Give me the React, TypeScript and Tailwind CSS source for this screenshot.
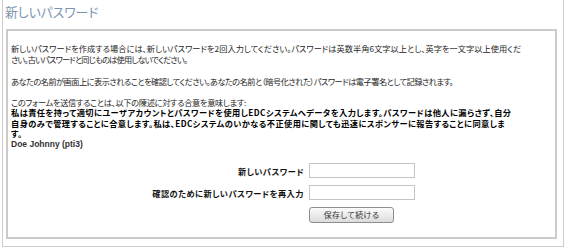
import React from 'react';

const jp = "font-['Noto_Sans_CJK_JP',sans-serif] [font-feature-settings:'palt']";

const FieldRow: React.FC<{ label: string }> = ({ label }) => (
  <div className="flex items-center gap-[5px]">
    <span className="w-[293px] text-right font-bold text-[8.2px] tracking-[0.5px] leading-[14px] text-[#111]">{label}</span>
    <input
      type="password"
      className="w-[106px] h-[15px] border border-[#c4c4c4] bg-white outline-none"
    />
  </div>
);

export default function App() {
  return (
    <div className={`w-[568px] h-[247px] bg-white ${jp}`}>
      <div className="ml-[2px] w-[562px] h-[247px] border border-t-0 border-[#cdcdcd] flex flex-col">
        <div className="h-[29px] pl-[2px] pt-[3px] text-[12.8px] leading-[17px] text-[#7b93b0] font-normal">
          新しいパスワード
        </div>
        <div className="ml-[3px] mr-[6px] h-[210px] border-2 border-[#cbcbcb] bg-white pl-[3px] pt-[12px] text-[8.2px] leading-[10.5px] text-[#262626]">
          <p className="whitespace-nowrap">
            <span className="block tracking-[0.05px]">
              新しいパスワードを作成する場合には、新しいパスワードを2回入力してください。パスワードは英数半角6文字以上とし、英字を一文字以上使用くだ
            </span>
            <span className="block tracking-[-0.8px]">さい。古いパスワードと同じものは使用しないでください。</span>
          </p>
          <p className="mt-[12px] whitespace-nowrap tracking-[-0.5px]">
            あなたの名前が画面上に表示されることを確認してください。あなたの名前と（暗号化された）パスワードは電子署名として記録されます。
          </p>
          <div className="mt-[10px] whitespace-nowrap">
            <p className="tracking-[-0.3px]">このフォームを送信することは、以下の陳述に対する合意を意味します:</p>
            <p className="font-bold text-black tracking-[0.45px]">
              私は責任を持って適切にユーザアカウントとパスワードを使用しEDCシステムへデータを入力します。パスワードは他人に漏らさず、自分
              <br />
              自身のみで管理することに合意します。私は、EDCシステムのいかなる不正使用に関しても迅速にスポンサーに報告することに同意しま
              <br />
              す。
            </p>
            <p className="font-['Liberation_Sans',sans-serif] font-bold text-[8.5px] text-[#333]">Doe Johnny (pti3)</p>
          </div>
          <div className="mt-[14px] flex flex-col gap-[7px]">
            <FieldRow label="新しいパスワード" />
            <FieldRow label="確認のために新しいパスワードを再入力" />
            <div className="pl-[298px]">
              <button className="w-[85px] h-[16px] rounded-[3px] border border-[#8e8e8e] bg-gradient-to-b from-[#fbfbfb] to-[#dcdcdc] text-[8px] tracking-[0.4px] leading-[14px] text-[#333]">
                保存して続ける
              </button>
            </div>
          </div>
        </div>
      </div>
    </div>
  );
}
